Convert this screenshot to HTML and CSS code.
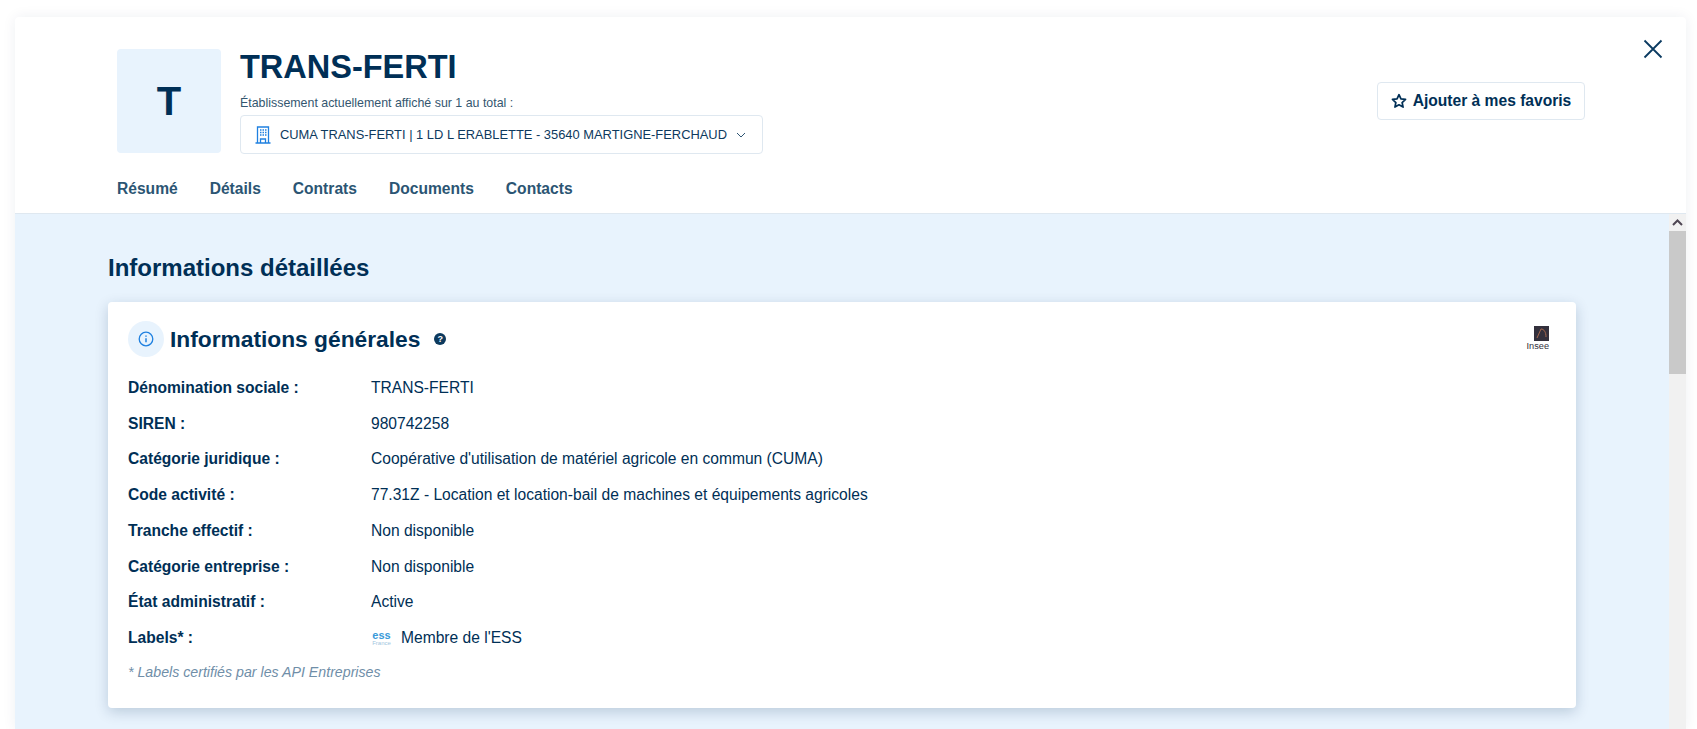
FILE: index.html
```html
<!DOCTYPE html>
<html lang="fr">
<head>
    <meta charset="UTF-8">
    <meta name="viewport" content="width=device-width, initial-scale=1.0">
    <title>TRANS-FERTI</title>
    <link rel="stylesheet" href="styles.css">
</head>
<body>
    <div class="modal">
        <header class="modal-header">
            <button class="close-btn" aria-label="Fermer">
                <svg width="20" height="20" viewBox="0 0 20 20"><path d="M1.5 1.5 L18.5 18.5 M18.5 1.5 L1.5 18.5" stroke="#0a3a60" stroke-width="1.8" fill="none"/></svg>
            </button>
            <div class="header-top">
                <div class="avatar">T</div>
                <div class="identity">
                    <h1>TRANS-FERTI</h1>
                    <p class="etab-label">Établissement actuellement affiché sur 1 au total :</p>
                    <div class="etab-select">
                        <svg class="building" width="16" height="18" viewBox="0 0 16 18" fill="none" stroke="#1f80e0" stroke-width="1.3">
                            <path d="M2.5 17V1h11v16M0.5 17h15"/>
                            <path d="M5.5 17v-4h5v4"/>
                            <path d="M5 4h1.5M7.5 4H9M10 4h1.5M5 6.5h1.5M7.5 6.5H9M10 6.5h1.5M5 9h1.5M7.5 9H9M10 9h1.5" stroke-width="1.3"/>
                        </svg>
                        <span>CUMA TRANS-FERTI | 1 LD L ERABLETTE - 35640 MARTIGNE-FERCHAUD</span>
                        <svg class="chevron" width="10" height="6" viewBox="0 0 10 6" fill="none" stroke="#2e5573" stroke-width="1"><path d="M1 1l4 4 4-4"/></svg>
                    </div>
                </div>
                <button class="fav-btn">
                    <svg width="16" height="16" viewBox="0 0 24 24" fill="none" stroke="#002f56" stroke-width="2.6" stroke-linejoin="round"><path d="M12 2.5l2.9 6.3 6.9.8-5.1 4.7 1.4 6.8-6.1-3.4-6.1 3.4 1.4-6.8L2.200 9.600l6.900-.8z"/></svg>
                    Ajouter à mes favoris
                </button>
            </div>
            <nav class="tabs">
                <a>Résumé</a>
                <a>Détails</a>
                <a>Contrats</a>
                <a>Documents</a>
                <a>Contacts</a>
            </nav>
        </header>
        <div class="modal-body">
            <main class="content">
                <h2>Informations détaillées</h2>
                <section class="card">
                    <div class="card-title">
                        <span class="info-icon">
                            <svg width="16" height="16" viewBox="0 0 16 16" fill="none" stroke="#1f80e0" stroke-width="1.3"><circle cx="8" cy="8" r="6.800"/><path d="M8 7.200v4" stroke-width="1.500"/><path d="M8 4.400v1.300" stroke-width="1.500"/></svg>
                        </span>
                        <h3>Informations générales</h3>
                        <span class="help-icon">?</span>
                        <div class="insee-logo">
                            <svg width="15" height="15" viewBox="0 0 15 15"><rect width="15" height="15" fill="#33303c"/><path d="M3 12L7 3c3 0 5 3 5 8" stroke="#a8694f" stroke-width="1" fill="none"/></svg>
                            <span>Insee</span>
                        </div>
                    </div>
                    <dl class="rows">
                        <div class="row"><dt>Dénomination sociale :</dt><dd>TRANS-FERTI</dd></div>
                        <div class="row"><dt>SIREN :</dt><dd>980742258</dd></div>
                        <div class="row"><dt>Catégorie juridique :</dt><dd>Coopérative d'utilisation de matériel agricole en commun (CUMA)</dd></div>
                        <div class="row"><dt>Code activité :</dt><dd>77.31Z - Location et location-bail de machines et équipements agricoles</dd></div>
                        <div class="row"><dt>Tranche effectif :</dt><dd>Non disponible</dd></div>
                        <div class="row"><dt>Catégorie entreprise :</dt><dd>Non disponible</dd></div>
                        <div class="row"><dt>État administratif :</dt><dd>Active</dd></div>
                        <div class="row"><dt>Labels* :</dt><dd class="label-value"><span class="ess-logo"><b>ess</b><i>France</i></span>Membre de l'ESS</dd></div>
                    </dl>
                    <p class="note">* Labels certifiés par les API Entreprises</p>
                </section>
            </main>
            <div class="scrollbar">
                <div class="scroll-up">
                    <svg width="11" height="7" viewBox="0 0 11 7" fill="none" stroke="#4f4653" stroke-width="2"><path d="M1 6l4.500-4.500L10 6"/></svg>
                </div>
                <div class="scroll-thumb"></div>
            </div>
        </div>
    </div>
</body>
</html>
```

FILE: styles.css
```css
html, body {
    height: 100%;
}
body {
    margin: 0;
    height: 729px;
    overflow: hidden;
    background-color: #fff;
    font-family: "Liberation Sans", Arial, sans-serif;
    color: #002f56;
}
.modal {
    position: relative;
    margin: 17px 11px 0 15px;
    height: 712px;
    display: flex;
    flex-direction: column;
    border-radius: 4px 4px 0 0;
    box-shadow: 0 0 14px rgba(0, 47, 86, 0.07);
    background-color: #fff;
}
.modal-header {
    height: 197px;
    box-sizing: border-box;
    padding: 32px 0 0 102px;
    border-bottom: 1px solid #dfe8f0;
}
.close-btn {
    position: absolute;
    top: 22px;
    right: 23px;
    padding: 0;
    border: none;
    background: none;
    line-height: 0;
}
.header-top {
    display: flex;
    align-items: flex-start;
}
.avatar {
    width: 104px;
    height: 104px;
    display: flex;
    align-items: center;
    justify-content: center;
    border-radius: 4px;
    background-color: #e8f3fd;
    font-size: 40px;
    font-weight: bold;
}
.identity {
    margin-left: 19px;
}
h1 {
    margin: 0;
    font-size: 32.5px;
    line-height: 37px;
    font-weight: bold;
}
.etab-label {
    margin: 10px 0 0;
    font-size: 12.4px;
    line-height: 14px;
    color: #34566f;
}
.etab-select {
    margin-top: 5px;
    width: 523px;
    height: 39px;
    box-sizing: border-box;
    display: flex;
    align-items: center;
    padding-left: 14px;
    border: 1px solid #dfe8f0;
    border-radius: 4px;
    font-size: 12.9px;
    color: #0d3a5e;
}
.etab-select span {
    margin-left: 9px;
}
.etab-select .chevron {
    margin-left: 9px;
}
.fav-btn {
    margin: 33px 101px 0 auto;
    width: 208px;
    height: 38px;
    display: flex;
    align-items: center;
    justify-content: center;
    gap: 6px;
    background-color: #fff;
    border: 1px solid #dfe8f0;
    border-radius: 4px;
    font-family: inherit;
    font-size: 15.6px;
    font-weight: bold;
    color: #002f56;
}
.tabs {
    margin-top: 25px;
    display: flex;
    gap: 32px;
}
.tabs a {
    font-size: 15.6px;
    line-height: 19px;
    font-weight: bold;
    color: #2b5573;
}
.modal-body {
    flex: 1;
    display: flex;
    min-height: 0;
    background-color: #e8f3fd;
}
.content {
    flex: 1;
    padding: 40px 93px 0 93px;
}
h2 {
    margin: 0;
    font-size: 24px;
    line-height: 28px;
    font-weight: bold;
}
.card {
    margin-top: 20px;
    height: 406px;
    box-sizing: border-box;
    padding: 19px 20px 0;
    background-color: #fff;
    border-radius: 4px;
    box-shadow: 0 4px 14px rgba(0, 47, 86, 0.2);
}
.card-title {
    display: flex;
    align-items: center;
}
.info-icon {
    width: 36px;
    height: 36px;
    display: flex;
    align-items: center;
    justify-content: center;
    border-radius: 50%;
    background-color: #e8f3fd;
}
h3 {
    margin: 0 0 0 6px;
    font-size: 22.75px;
    line-height: 36px;
    font-weight: bold;
}
.help-icon {
    margin-left: 14px;
    width: 12px;
    height: 12px;
    border-radius: 50%;
    background-color: #0d3a5e;
    color: #fff;
    font-size: 9px;
    line-height: 12px;
    font-weight: bold;
    text-align: center;
}
.insee-logo {
    margin: 0 7px 2px auto;
    width: 22px;
    display: flex;
    flex-direction: column;
    align-items: flex-end;
}
.insee-logo span {
    font-size: 9.2px;
    line-height: 10px;
    color: #33303c;
}
.rows {
    margin: 13px 0 0;
}
.row {
    display: flex;
    align-items: center;
    height: 35.75px;
}
dt {
    width: 243px;
    font-size: 15.6px;
    font-weight: bold;
}
dd {
    margin: 0;
    font-size: 15.6px;
}
.label-value {
    display: flex;
    align-items: center;
}
.ess-logo {
    width: 17px;
    margin: 0 11px 0 2px;
    display: flex;
    flex-direction: column;
    align-items: center;
}
.ess-logo b {
    font-size: 11px;
    line-height: 10px;
    color: #3a9ad9;
}
.ess-logo i {
    font-size: 6px;
    line-height: 7px;
    font-style: normal;
    color: #9fc6e0;
}
.note {
    margin: 8px 0 0;
    font-size: 14.2px;
    line-height: 16px;
    font-style: italic;
    color: #6f8ea8;
}
.scrollbar {
    width: 17px;
    background-color: #f1f1f1;
}
.scroll-up {
    height: 17px;
    display: flex;
    align-items: center;
    justify-content: center;
}
.scroll-thumb {
    height: 143px;
    background-color: #c9c9c9;
}
```
